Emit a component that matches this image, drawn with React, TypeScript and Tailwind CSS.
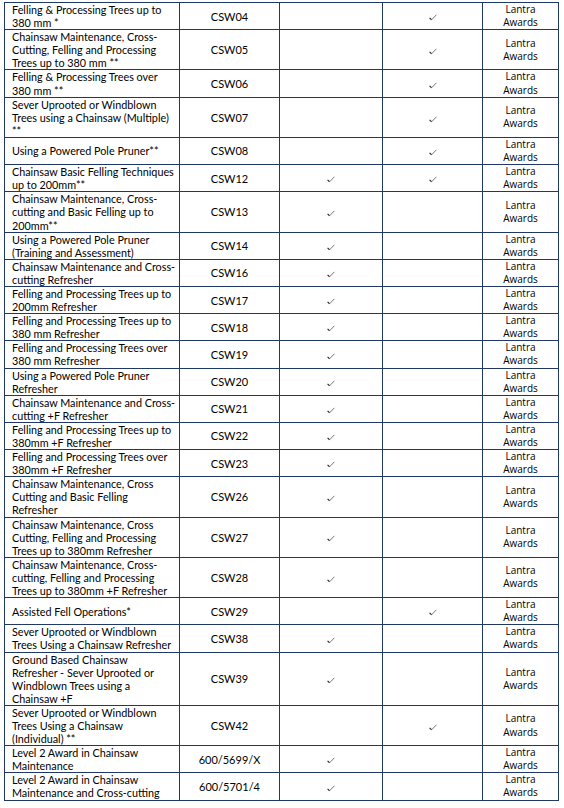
import React from "react";

type Row = { name: string[]; code: string; a?: boolean; b?: boolean };

const rows: Row[] = [
  { name: ["Felling & Processing Trees up to", "380 mm *"], code: "CSW04", b: true },
  { name: ["Chainsaw Maintenance, Cross-", "Cutting, Felling and Processing", "Trees up to 380 mm **"], code: "CSW05", b: true },
  { name: ["Felling & Processing Trees over", "380 mm **"], code: "CSW06", b: true },
  { name: ["Sever Uprooted or Windblown", "Trees using a Chainsaw (Multiple)", "**"], code: "CSW07", b: true },
  { name: ["Using a Powered Pole Pruner**"], code: "CSW08", b: true },
  { name: ["Chainsaw Basic Felling Techniques", "up to 200mm**"], code: "CSW12", a: true, b: true },
  { name: ["Chainsaw Maintenance, Cross-", "cutting and Basic Felling up to", "200mm**"], code: "CSW13", a: true },
  { name: ["Using a Powered Pole Pruner", "(Training and Assessment)"], code: "CSW14", a: true },
  { name: ["Chainsaw Maintenance and Cross-", "cutting Refresher"], code: "CSW16", a: true },
  { name: ["Felling and Processing Trees up to", "200mm Refresher"], code: "CSW17", a: true },
  { name: ["Felling and Processing Trees up to", "380 mm Refresher"], code: "CSW18", a: true },
  { name: ["Felling and Processing Trees over", "380 mm Refresher"], code: "CSW19", a: true },
  { name: ["Using a Powered Pole Pruner", "Refresher"], code: "CSW20", a: true },
  { name: ["Chainsaw Maintenance and Cross-", "cutting +F Refresher"], code: "CSW21", a: true },
  { name: ["Felling and Processing Trees up to", "380mm +F Refresher"], code: "CSW22", a: true },
  { name: ["Felling and Processing Trees over", "380mm +F Refresher"], code: "CSW23", a: true },
  { name: ["Chainsaw Maintenance, Cross", "Cutting and Basic Felling", "Refresher"], code: "CSW26", a: true },
  { name: ["Chainsaw Maintenance, Cross", "Cutting, Felling and Processing", "Trees up to 380mm Refresher"], code: "CSW27", a: true },
  { name: ["Chainsaw Maintenance, Cross-", "cutting, Felling and Processing", "Trees up to 380mm +F Refresher"], code: "CSW28", a: true },
  { name: ["Assisted Fell Operations*"], code: "CSW29", b: true },
  { name: ["Sever Uprooted or Windblown", "Trees Using a Chainsaw Refresher"], code: "CSW38", a: true },
  { name: ["Ground Based Chainsaw", "Refresher - Sever Uprooted or", "Windblown Trees using a", "Chainsaw +F"], code: "CSW39", a: true },
  { name: ["Sever Uprooted or Windblown", "Trees Using a Chainsaw", "(Individual) **"], code: "CSW42", b: true },
  { name: ["Level 2 Award in Chainsaw", "Maintenance"], code: "600/5699/X", a: true },
  { name: ["Level 2 Award in Chainsaw", "Maintenance and Cross-cutting"], code: "600/5701/4", a: true },
];

function Tick() {
  return (
    <svg width="8" height="7" viewBox="0 0 8 7" className="inline-block align-middle">
      <path d="M0.6 3.8 L2.6 5.8" stroke="#222" strokeWidth="1.1" fill="none" />
      <path d="M2.6 5.8 L7.4 0.8" stroke="#666" strokeWidth="0.9" fill="none" />
    </svg>
  );
}

const cell = "border border-[#1f3864] align-middle p-0";
const lato = { fontFamily: "Lato, 'Liberation Sans', sans-serif" };
const sego = { fontFamily: "'Open Sans', 'Noto Sans', sans-serif" };

export default function App() {
  return (
    <div className="w-[564px] h-[808px] bg-white overflow-hidden pt-[2px] pl-[4px]">
      <table className="table-fixed border-collapse w-[554px] text-black leading-[13.1px]">
        <colgroup>
          <col className="w-[175px]" />
          <col className="w-[100px]" />
          <col className="w-[103px]" />
          <col className="w-[100px]" />
          <col className="w-[76px]" />
        </colgroup>
        <tbody>
          {rows.map((r) => (
            <tr key={r.code}>
              <td className={cell + " pl-[7px] pr-[2px] text-[10.8px] whitespace-nowrap overflow-hidden"} style={lato}>
                {r.name.map((l, i) => (
                  <div key={i}>{l}</div>
                ))}
              </td>
              <td className={cell + " text-center text-[11px]"} style={lato}>
                {r.code}
              </td>
              <td className={cell + " text-center leading-none"}>{r.a ? <Tick /> : null}</td>
              <td className={cell + " text-center leading-none"}>{r.b ? <Tick /> : null}</td>
              <td className={cell + " text-center text-[10px]"} style={sego}>
                Lantra
                <br />
                Awards
              </td>
            </tr>
          ))}
        </tbody>
      </table>
    </div>
  );
}
